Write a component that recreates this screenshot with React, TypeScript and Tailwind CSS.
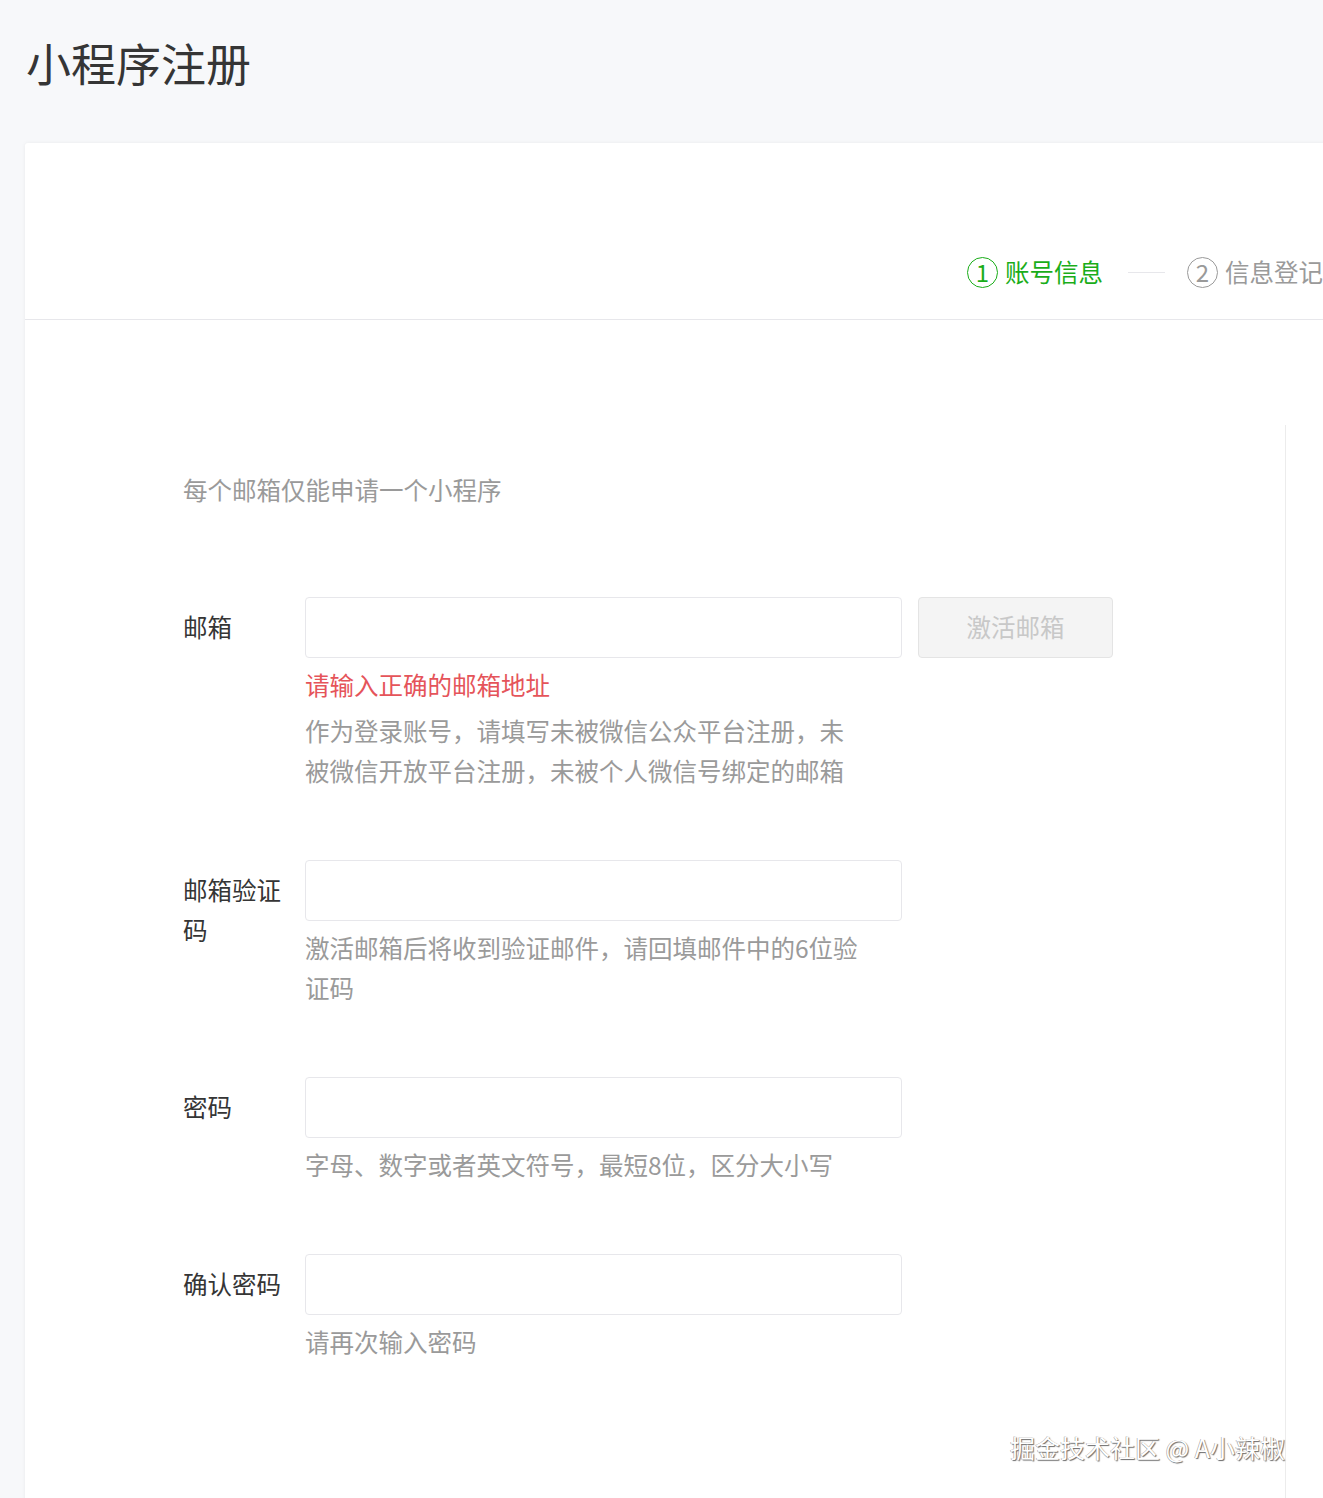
const FONT = "font-['Noto_Sans_CJK_SC','Noto_Sans',sans-serif]";

type Field = {
  label: string;
  hints: string[];
  error?: string;
  button?: string;
};

const FIELDS: Field[] = [
  {
    label: '邮箱',
    error: '请输入正确的邮箱地址',
    hints: ['作为登录账号，请填写未被微信公众平台注册，未被微信开放平台注册，未被个人微信号绑定的邮箱'],
    button: '激活邮箱',
  },
  {
    label: '邮箱验证码',
    hints: ['激活邮箱后将收到验证邮件，请回填邮件中的6位验证码'],
  },
  {
    label: '密码',
    hints: ['字母、数字或者英文符号，最短8位，区分大小写'],
  },
  {
    label: '确认密码',
    hints: ['请再次输入密码'],
  },
];

function Step({ n, text, active }: { n: number; text: string; active?: boolean }) {
  const color = active ? 'text-[#1aad19] border-[#1aad19]' : 'text-[#9a9a9a] border-[#9a9a9a]';
  return (
    <div className={`flex items-center shrink-0 ${active ? 'text-[#1aad19]' : 'text-[#9a9a9a]'}`}>
      <span
        className={`w-[31px] h-[31px] rounded-full border-[1.5px] flex items-center justify-center text-[24px] leading-none ${color}`}
      >
        {n}
      </span>
      <span className="ml-[7px] text-[24.5px] leading-[36px] whitespace-nowrap">{text}</span>
    </div>
  );
}

function FormRow({ field }: { field: Field }) {
  return (
    <div className="flex items-start">
      <label className="w-[110px] mr-[12px] pt-[10px] text-[24.5px] leading-[40px] text-[#353535]">
        {field.label}
      </label>
      <div className="flex flex-col">
        <div className="flex items-start">
          <input
            type="text"
            className="w-[597px] h-[61px] border border-[#e7e7eb] rounded-[4px] bg-white outline-none px-4 text-[24px]"
          />
          {field.button && (
            <button className="ml-[16px] w-[195px] h-[61px] rounded-[4px] border border-[#e4e4e4] bg-[#f4f4f4] text-[24.5px] text-[#c8c8c8]">
              {field.button}
            </button>
          )}
        </div>
        {field.error && (
          <p className="mt-[7px] mb-[6px] text-[24.5px] leading-[40px] text-[#e5545a]">{field.error}</p>
        )}
        {field.hints.map((h) => (
          <p
            key={h}
            className={`${field.error ? '' : 'mt-[7px]'} w-[558px] text-[24.5px] leading-[40px] text-[#9a9a9a]`}
          >
            {h}
          </p>
        ))}
      </div>
    </div>
  );
}

export default function App() {
  return (
    <div className={`relative w-[1323px] h-[1498px] overflow-hidden bg-[#f7f8fa] ${FONT}`}>
      <h1 className="pl-[26px] pt-[35px] text-[45px] leading-[56px] text-[#353535] font-normal">小程序注册</h1>

      <div className="mt-[52px] ml-[25px] w-[1340px] min-h-[1400px] bg-white rounded-tl-[3px] shadow-[0_0_4px_rgba(0,0,0,0.06)]">
        {/* steps header */}
        <div className="h-[177px] border-b border-[#e7e7eb] pt-[111px] pl-[942px] flex items-start">
          <div className="flex items-center h-[36px]">
            <Step n={1} text="账号信息" active />
            <span className="ml-[25px] mr-[22px] w-[37px] h-px bg-[#e7e7eb]" />
            <Step n={2} text="信息登记" />
          </div>
        </div>

        {/* body */}
        <div className="pt-[105px]">
          <div className="w-[1261px] min-h-[1080px] border-r border-[#ececec] pl-[158px] pt-[45px]">
            <p className="text-[24.5px] leading-[40px] text-[#9a9a9a]">每个邮箱仅能申请一个小程序</p>
            <div className="mt-[87px] flex flex-col gap-[69px]">
              {FIELDS.map((f) => (
                <FormRow key={f.label} field={f} />
              ))}
            </div>
          </div>
        </div>
      </div>

      {/* watermark */}
      <div className="absolute left-[1010px] top-[1430px] text-[25px] leading-[34px] whitespace-nowrap text-white [text-shadow:1px_1px_1px_#6b6b6b,-0.5px_-0.5px_0_#9a9a9a] font-['Noto_Sans_CJK_SC',sans-serif]">
        掘金技术社区 @ A小辣椒
      </div>
    </div>
  );
}
